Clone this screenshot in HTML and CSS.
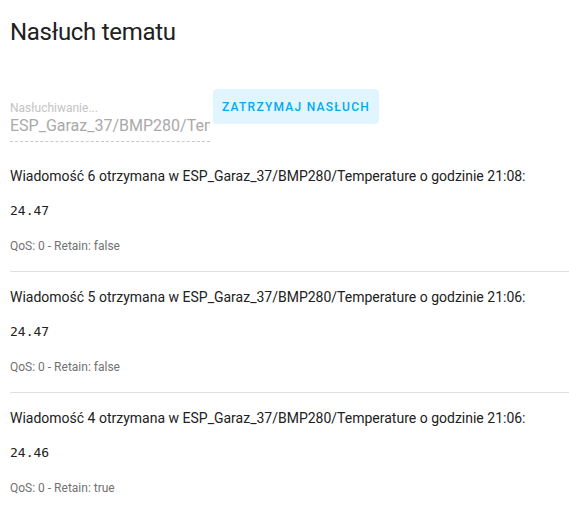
FILE: index.html
```html
<!DOCTYPE html>
<html lang="pl">
<head>
<meta charset="utf-8">
<link rel="stylesheet" href="styles.css">
</head>
<body>
<div class="page">
  <h1 class="title">Nasłuch tematu</h1>
  <div class="listen-row">
    <div class="field">
      <div class="field-label">Nasłuchiwanie...</div>
      <div class="field-value">ESP_Garaz_37/BMP280/Temperature</div>
    </div>
    <button class="stop-btn">Zatrzymaj nasłuch</button>
  </div>
  <div class="messages">
    <div class="msg">
      <div class="msg-title">Wiadomość 6 otrzymana w ESP_Garaz_37/BMP280/Temperature o godzinie 21:08:</div>
      <pre class="payload">24.47</pre>
      <div class="meta">QoS: 0 - Retain: false</div>
    </div>
    <div class="msg">
      <div class="msg-title">Wiadomość 5 otrzymana w ESP_Garaz_37/BMP280/Temperature o godzinie 21:06:</div>
      <pre class="payload">24.47</pre>
      <div class="meta">QoS: 0 - Retain: false</div>
    </div>
    <div class="msg">
      <div class="msg-title">Wiadomość 4 otrzymana w ESP_Garaz_37/BMP280/Temperature o godzinie 21:06:</div>
      <pre class="payload">24.46</pre>
      <div class="meta">QoS: 0 - Retain: true</div>
    </div>
  </div>
</div>
</body>
</html>
```

FILE: styles.css
```css
html, body {
  margin: 0;
  padding: 0;
  background: #ffffff;
}
body {
  font-family: Roboto, "Noto Sans", sans-serif;
  color: #212121;
  overflow: hidden;
}
.page {
  padding: 16px 0 0 10px;
}
.title {
  margin: 0;
  font-size: 24px;
  line-height: 32px;
  font-weight: 400;
  letter-spacing: -0.012em;
  color: #212121;
}
.listen-row {
  display: flex;
  align-items: flex-start;
  gap: 3px;
  margin-top: 41px;
}
.field {
  width: 200px;
  margin-top: 11px;
  border-bottom: 1px dashed #c8c8c8;
  padding-bottom: 5px;
}
.field-label {
  font-size: 12px;
  line-height: 16px;
  color: #c4c4c4;
}
.field-value {
  font-size: 16px;
  line-height: 20px;
  color: #a9a9a9;
  white-space: nowrap;
  overflow: hidden;
}
.stop-btn {
  height: 35px;
  padding: 0 9px;
  border: none;
  border-radius: 4px;
  background: #e1f5fe;
  color: #03a9f4;
  font-family: Roboto, sans-serif;
  font-size: 12px;
  font-weight: 500;
  letter-spacing: 1.25px;
  text-transform: uppercase;
}
.messages {
  margin-top: 24px;
}
.msg {
  border-bottom: 1px solid #e0e0e0;
  margin-bottom: 15px;
}
.msg:last-child {
  border-bottom: none;
}
.msg-title {
  font-size: 14px;
  line-height: 20px;
  color: #212121;
  white-space: nowrap;
}
.payload {
  margin: 17px 0 0;
  font-family: "DejaVu Sans Mono", monospace;
  font-size: 13px;
  line-height: 16px;
  color: #212121;
}
.meta {
  margin: 19px 0 17px;
  font-size: 12px;
  line-height: 16px;
  color: #727272;
}
```
